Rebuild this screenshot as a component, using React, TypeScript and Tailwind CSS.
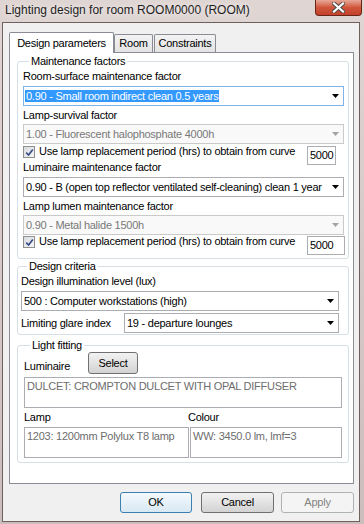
import React from 'react';

const font = "font-['Liberation_Sans',Arial,sans-serif] text-[11px] leading-[13px] tracking-[-0.25px]";

function Arrow({ disabled }: { disabled?: boolean }) {
  return (
    <span className="w-[15px] h-full flex items-center justify-center shrink-0">
      <svg width="7" height="4" viewBox="0 0 7 4">
        <path d="M0 0H7L3.5 4Z" fill={disabled ? '#a3a3a3' : '#000'} />
      </svg>
    </span>
  );
}

function Combo({
  text,
  width,
  disabled,
  selected,
}: {
  text: string;
  width: string;
  disabled?: boolean;
  selected?: boolean;
}) {
  const box = disabled
    ? 'border-[#cacaca] bg-[#f9f9f9] text-[#787878]'
    : selected
    ? 'border-[#7eb4ea] bg-white text-black'
    : 'border-[#abadb3] bg-white text-black';
  return (
    <div className={`${width} h-[20px] border ${box} flex items-center`}>
      <div className={`flex-1 min-w-0 overflow-hidden whitespace-nowrap ${selected ? 'pl-[1px]' : 'pl-[2px]'}`}>
        {selected ? <span className="bg-[#3399ff] text-white px-[1px]">{text}</span> : text}
      </div>
      <Arrow disabled={disabled} />
    </div>
  );
}

function Check() {
  return (
    <span className="w-[12px] h-[12px] border border-[#8e8f8f] bg-white flex items-center justify-center shrink-0">
      <span className="w-[10px] h-[10px] bg-linear-to-br from-[#d9dbe0] to-[#f6f6f6] flex items-center justify-center">
        <svg width="9" height="9" viewBox="0 0 9 9">
          <path d="M1.2 4.6L3.6 7L7.8 1.4" stroke="#3b4d86" strokeWidth="1.7" fill="none" />
        </svg>
      </span>
    </span>
  );
}

function CheckRow({ height, boxWidth }: { height: string; boxWidth: string }) {
  return (
    <div className={`flex items-start ${height}`}>
      <Check />
      <span className="ml-[4px] w-[268px] whitespace-nowrap -mt-[1px]">
        Use lamp replacement period (hrs) to obtain from curve
      </span>
      <div className={`${boxWidth} h-[19px] shrink-0 border border-[#abadb3] bg-white pl-[2px] flex items-center`}>
        5000
      </div>
    </div>
  );
}

function Tab({ label, active, width }: { label: string; active?: boolean; width: string }) {
  return active ? (
    <div className={`${width} h-[21px] -mb-px relative z-10 bg-white border border-b-0 border-[#898c95] rounded-t-[2px] flex items-center justify-center`}>
      {label}
    </div>
  ) : (
    <div className={`${width} h-[18px] bg-linear-to-b from-[#f3f3f3] to-[#e3e3e3] border border-b-0 border-[#898c95] rounded-t-[2px] flex items-center justify-center`}>
      {label}
    </div>
  );
}

function Button({ label, width, primary, disabled }: { label: string; width: string; primary?: boolean; disabled?: boolean }) {
  const look = disabled
    ? 'border-[#adb2b5] bg-[#f4f4f4] text-[#838383]'
    : primary
    ? 'border-[#3c7fb1] bg-linear-to-b from-[#f4f9fd] to-[#d8e8f3] text-black'
    : 'border-[#707070] bg-linear-to-b from-[#f2f2f2] to-[#d3d3d3] text-black';
  return (
    <div className={`${width} h-[21px] border rounded-[3px] ${look} flex items-center justify-center`}>
      {label}
    </div>
  );
}

export default function App() {
  return (
    <div className={`w-[364px] h-[524px] bg-linear-to-b from-[#dfd5d3] to-[#cbbdbb] pt-[22px] pl-[2px] pr-[4px] pb-[2px] relative ${font}`}>
      {/* title bar */}
      <div className="absolute top-0 left-[5px] h-[21px] flex items-center font-['Liberation_Sans',Arial,sans-serif] text-[12px] tracking-normal text-[#1e1e1e] [text-shadow:0_0_6px_#ffffff]">
        Lighting design for room ROOM0000 (ROOM)
      </div>
      <div className="absolute top-0 right-[2px] w-[47px] h-[16px] rounded-b-[4px] border border-t-0 border-[#6b2418] bg-linear-to-b from-[#e8a898] via-[#d0553b] to-[#c2412a] flex items-center justify-center">
        <svg width="13" height="11" viewBox="0 0 13 11">
          <path d="M2 1.5L11 9.5M11 1.5L2 9.5" stroke="#4a4a4a" strokeWidth="4" strokeLinecap="square" />
          <path d="M2 1.5L11 9.5M11 1.5L2 9.5" stroke="#ffffff" strokeWidth="2.2" strokeLinecap="square" />
        </svg>
      </div>

      {/* client area */}
      <div className="h-full border border-[#6f5f5d] bg-[#f0f0f0]">
        <div className="ml-[6px] mt-[9px] h-[20px] flex items-end">
          <Tab label="Design parameters" active width="w-[105px]" />
          <Tab label="Room" width="w-[39px]" />
          <Tab label="Constraints" width="w-[62px] ml-[1px]" />
        </div>

        <div className="ml-[6px] w-[345px] h-[432px] border border-[#898c95] bg-white">
          {/* Maintenance factors */}
          <fieldset className="ml-[7px] mt-[2px] w-[332px] border border-[#d5dfe5] rounded-[3px] pl-[5px] pr-[3px] pt-[2px] pb-[3px]">
            <legend className="ml-[6px] px-[2px]">Maintenance factors</legend>
            <div>Room-surface maintenance factor</div>
            <div className="mt-[3px]">
              <Combo text="0.90 - Small room indirect clean 0.5 years" width="w-[321px]" selected />
            </div>
            <div className="mt-[3px]">Lamp-survival factor</div>
            <div className="mt-[2px]">
              <Combo text="1.00 - Fluorescent halophosphate 4000h" width="w-[321px]" disabled />
            </div>
            <div className="mt-[2px]">
              <CheckRow height="h-[15px]" boxWidth="w-[29px]" />
            </div>
            <div>Luminaire maintenance factor</div>
            <div className="mt-[3px]">
              <Combo text="0.90 - B (open top reflector ventilated self-cleaning) clean 1 year" width="w-[321px]" />
            </div>
            <div className="mt-[3px]">Lamp lumen maintenance factor</div>
            <div className="mt-[2px]">
              <Combo text="0.90 - Metal halide 1500h" width="w-[321px]" disabled />
            </div>
            <div className="mt-[1px]">
              <CheckRow height="h-[19px]" boxWidth="w-[38px]" />
            </div>
          </fieldset>

          {/* Design criteria */}
          <fieldset className="ml-[7px] mt-[1px] w-[332px] border border-[#d5dfe5] rounded-[3px] pl-[3px] pt-[2px] pb-[1px]">
            <legend className="ml-[6px] px-[2px]">Design criteria</legend>
            <div>Design illumination level (lux)</div>
            <div className="mt-[3px]">
              <Combo text="500 : Computer workstations (high)" width="w-[318px]" />
            </div>
            <div className="mt-[2px] flex items-center">
              <span className="w-[103px] whitespace-nowrap">Limiting glare index</span>
              <Combo text="19 - departure lounges" width="w-[215px]" />
            </div>
          </fieldset>

          {/* Light fitting */}
          <fieldset className="ml-[7px] mt-[4px] w-[332px] border border-[#d5dfe5] rounded-[3px] pl-[6px] pb-[4px]">
            <legend className="ml-[6px] px-[2px]">Light fitting</legend>
            <div className="h-[22px] flex items-end">
              <span className="w-[64px] pb-[1px]">Luminaire</span>
              <Button label="Select" width="w-[50px] h-[22px]" />
            </div>
            <div className="mt-[3px] w-[318px] h-[31px] border border-[#abadb3] bg-white text-[#6d6d6d] pl-[2px] pt-[2px] whitespace-nowrap">
              DULCET: CROMPTON DULCET WITH OPAL DIFFUSER
            </div>
            <div className="mt-[3px] flex">
              <span className="w-[164px]">Lamp</span>
              <span>Colour</span>
            </div>
            <div className="mt-[3px] flex gap-[1px]">
              <div className="w-[165px] h-[31px] border border-[#abadb3] bg-white text-[#6d6d6d] pl-[2px] pt-[2px] whitespace-nowrap">
                1203: 1200mm Polylux T8 lamp
              </div>
              <div className="w-[152px] h-[31px] border border-[#abadb3] bg-white text-[#6d6d6d] pl-[2px] pt-[2px] whitespace-nowrap">
                WW: 3450.0 lm, lmf=3
              </div>
            </div>
          </fieldset>
        </div>

        {/* dialog buttons */}
        <div className="mt-[8px] pl-[117px] flex">
          <Button label="OK" width="w-[72px]" primary />
          <Button label="Cancel" width="w-[73px] ml-[9px]" />
          <Button label="Apply" width="w-[73px] ml-[7px]" disabled />
        </div>
      </div>
    </div>
  );
}
